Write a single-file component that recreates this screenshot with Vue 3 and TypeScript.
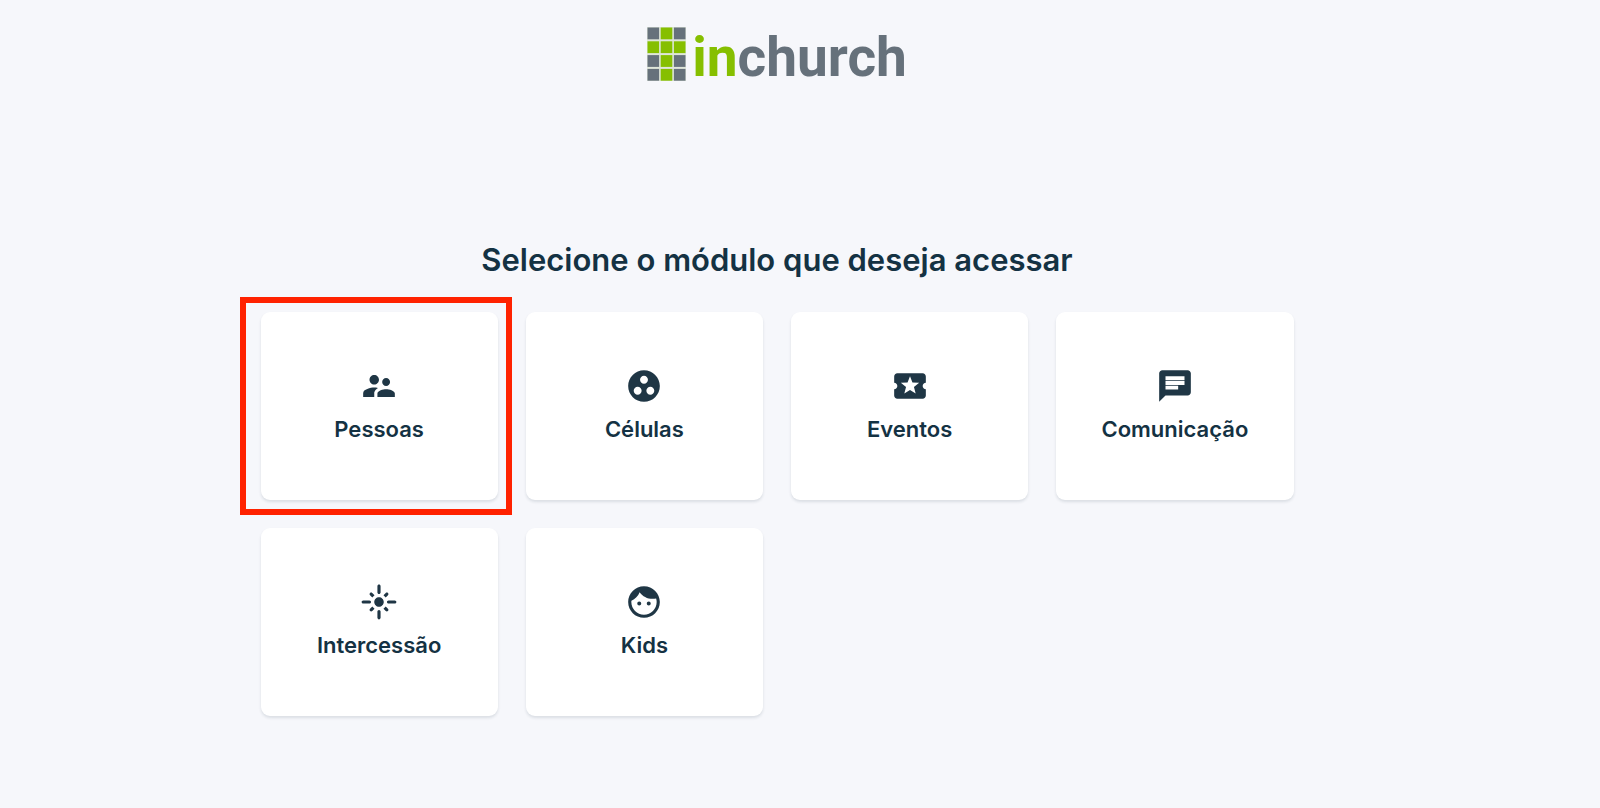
<script setup lang="ts">
type IconName = 'people' | 'cells' | 'ticket' | 'chat' | 'flare' | 'face'

interface Module {
  label: string
  icon: IconName
  highlighted?: boolean
}

const modules: Module[] = [
  { label: 'Pessoas', icon: 'people', highlighted: true },
  { label: 'Células', icon: 'cells' },
  { label: 'Eventos', icon: 'ticket' },
  { label: 'Comunicação', icon: 'chat' },
  { label: 'Intercessão', icon: 'flare' },
  { label: 'Kids', icon: 'face' },
]

const paths: Record<IconName, string> = {
  people:
    'M16.5 12c1.38 0 2.49-1.12 2.49-2.5S17.88 7 16.5 7C15.12 7 14 8.12 14 9.5s1.12 2.5 2.5 2.5zM9 11c1.66 0 2.99-1.34 2.99-3S10.66 5 9 5C7.34 5 6 6.34 6 8s1.34 3 3 3zm7.5 3c-1.83 0-5.5.92-5.5 2.75V19h11v-2.25c0-1.83-3.67-2.75-5.5-2.75zM9 13c-2.33 0-7 1.17-7 3.5V19h7v-2.25c0-.85.33-2.34 2.37-3.47C10.5 13.1 9.66 13 9 13z',
  cells:
    'M12 2C6.48 2 2 6.48 2 12s4.48 10 10 10 10-4.48 10-10S17.52 2 12 2zM8 17.5c-1.38 0-2.5-1.12-2.5-2.5s1.12-2.5 2.5-2.5 2.5 1.12 2.5 2.5-1.12 2.5-2.5 2.5zM9.5 8c0-1.38 1.12-2.5 2.5-2.5s2.5 1.12 2.5 2.5-1.12 2.5-2.5 2.5S9.5 9.38 9.5 8zm6.5 9.5c-1.38 0-2.5-1.12-2.5-2.5s1.12-2.5 2.5-2.5 2.5 1.12 2.5 2.5-1.12 2.5-2.5 2.5z',
  ticket:
    'M20 12c0-1.1.9-2 2-2V6c0-1.1-.9-2-2-2H4c-1.1 0-1.99.9-1.99 2v4c1.1 0 1.99.9 1.99 2s-.89 2-2 2v4c0 1.1.9 2 2 2h16c1.1 0 2-.9 2-2v-4c-1.1 0-2-.9-2-2zm-4.42 4.8L12 14.5l-3.58 2.3 1.08-4.12-3.29-2.69 4.24-.25L12 5.8l1.54 3.95 4.24.25-3.29 2.69 1.09 4.11z',
  chat:
    'M20 2H4c-1.1 0-1.99.9-1.99 2L2 22l4-4h14c1.1 0 2-.9 2-2V4c0-1.1-.9-2-2-2zM6 8.4V5.9h12v2.5H6zM14 14.2H6v-2.4h8v2.4zM18 11.3H6V8.9h12v2.4z',
  flare:
    'M6 11H2c-.55 0-1 .45-1 1s.45 1 1 1h4c.55 0 1-.45 1-1s-.45-1-1-1zm3.17-3.24l-1.41-1.41c-.39-.39-1.02-.39-1.41 0s-.39 1.02 0 1.41l1.41 1.41 1.41-1.41zM12 1c-.55 0-1 .45-1 1v4c0 .55.45 1 1 1s1-.45 1-1V2c0-.55-.45-1-1-1zm5.66 6.76c.39-.39.39-1.02 0-1.41s-1.02-.39-1.41 0l-1.42 1.41 1.41 1.41 1.42-1.41zM17 12c0 .55.45 1 1 1h4c.55 0 1-.45 1-1s-.45-1-1-1h-4c-.55 0-1 .45-1 1zm-5-3c-1.66 0-3 1.34-3 3s1.34 3 3 3 3-1.34 3-3-1.34-3-3-3zm2.83 7.24l1.42 1.41c.39.39 1.02.39 1.41 0s.39-1.02 0-1.41l-1.42-1.41-1.41 1.41zm-8.48 1.41c.39.39 1.02.39 1.41 0l1.41-1.41-1.41-1.41-1.41 1.41c-.39.39-.39 1.02 0 1.41zM12 23c.55 0 1-.45 1-1v-4c0-.55-.45-1-1-1s-1 .45-1 1v4c0 .55.45 1 1 1z',
  face:
    'M9 11.75c-.69 0-1.25.56-1.25 1.25s.56 1.25 1.25 1.25 1.25-.56 1.25-1.25-.56-1.25-1.25-1.25zm6 0c-.69 0-1.25.56-1.25 1.25s.56 1.25 1.25 1.25 1.25-.56 1.25-1.25-.56-1.25-1.25-1.25zM12 2C6.48 2 2 6.48 2 12s4.48 10 10 10 10-4.48 10-10S17.52 2 12 2zm0 18c-4.41 0-8-3.59-8-8 0-.29.02-.58.05-.86 2.36-1.05 4.23-2.98 5.21-5.37C11.07 8.33 14.05 10 17.42 10c.78 0 1.53-.09 2.25-.26.21.71.33 1.47.33 2.26 0 4.41-3.59 8-8 8z',
}

const tiles = Array.from({ length: 12 }, (_, i) => {
  const col = i % 3
  const row = Math.floor(i / 3)
  return { x: col * 13.2 + 0.5, y: row * 13.8 + 0.5, green: col === 1 || row === 1 }
})
</script>

<template>
  <div class="page">
    <header class="brand">
      <svg class="mark" viewBox="0 0 39 54" aria-hidden="true">
        <rect width="39" height="54" fill="#dfe6da" />
        <rect
          v-for="(t, i) in tiles"
          :key="i"
          :x="t.x"
          :y="t.y"
          width="11.6"
          height="11.8"
          :fill="t.green ? '#86bf00' : '#66717b'"
        />
      </svg>
      <span class="wordmark"><span class="accent">in</span>church</span>
    </header>

    <main class="content">
      <h1 class="title">Selecione o módulo que deseja acessar</h1>
      <div class="grid">
        <button
          v-for="m in modules"
          :key="m.label"
          type="button"
          class="card"
          :class="{ highlighted: m.highlighted }"
        >
          <svg class="icon" viewBox="0 0 24 24" aria-hidden="true">
            <path fill-rule="evenodd" :d="paths[m.icon]" />
          </svg>
          <span class="label">{{ m.label }}</span>
        </button>
      </div>
    </main>
  </div>
</template>

<style>
body {
  margin: 0;
  background: #f6f7fb;
}
</style>

<style scoped>
.page {
  box-sizing: border-box;
  min-height: 100vh;
  padding: 24px 46px 24px 0;
  background: #f6f7fb;
  color: #143243;
  font-family: Inter, 'Liberation Sans', sans-serif;
}

.brand {
  display: flex;
  align-items: center;
  justify-content: center;
  gap: 6px;
  height: 60px;
}

.mark {
  width: 39px;
  height: 54px;
}

.wordmark {
  padding-top: 6px;
  font-family: Roboto, 'Liberation Sans', sans-serif;
  font-size: 55px;
  line-height: 60px;
  font-weight: 700;
  color: #66717b;
}

.accent {
  color: #86bf00;
}

.content {
  max-width: 1033px;
  margin: 152px auto 0;
}

.title {
  margin: 0 0 28px;
  font-size: 31px;
  line-height: 48px;
  font-weight: 600;
  text-align: center;
}

.grid {
  display: grid;
  grid-template-columns: repeat(4, 1fr);
  gap: 28px;
}

.card {
  position: relative;
  display: flex;
  flex-direction: column;
  align-items: center;
  gap: 12px;
  padding: 55px 12px 59px;
  border: 0;
  border-radius: 9px;
  background: #fff;
  box-shadow: 0 2px 3px rgba(23, 48, 63, 0.12);
  color: inherit;
  font: inherit;
  cursor: pointer;
}

.highlighted::after {
  content: '';
  position: absolute;
  inset: -15px -14px -15px -21px;
  border: 6px solid #ff2200;
}

.icon {
  width: 38px;
  height: 38px;
  fill: #1f3645;
}

.label {
  font-size: 22px;
  line-height: 24px;
  font-weight: 600;
}
</style>
